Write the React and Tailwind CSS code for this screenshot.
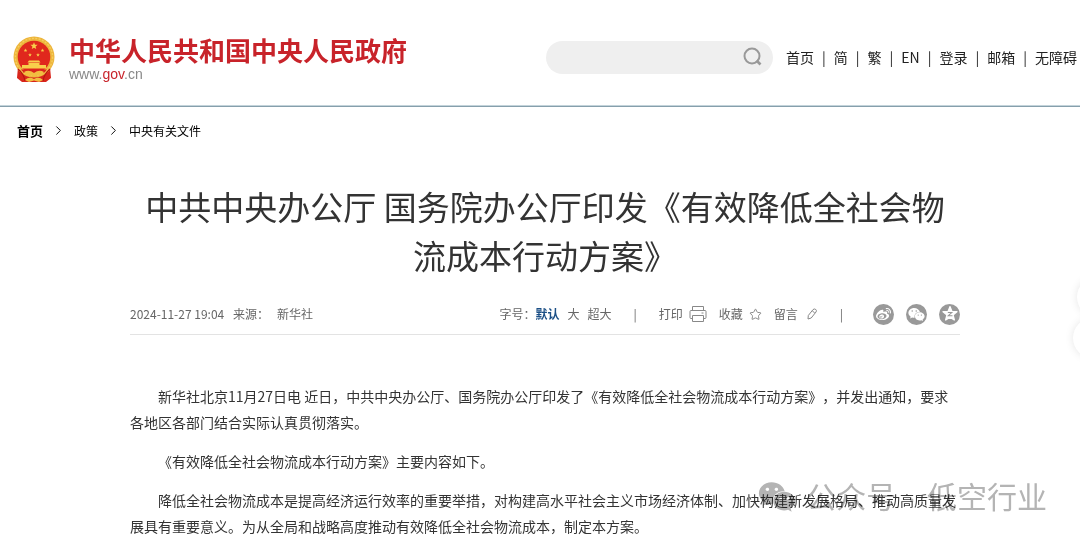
import { FaWeibo, FaWeixin } from "react-icons/fa";
import { ChevronRight, Star } from "lucide-react";

const navLinks = ["首页", "简", "繁", "EN", "登录", "邮箱", "无障碍"];

const paragraphs = [
  "新华社北京11月27日电 近日，中共中央办公厅、国务院办公厅印发了《有效降低全社会物流成本行动方案》，并发出通知，要求各地区各部门结合实际认真贯彻落实。",
  "《有效降低全社会物流成本行动方案》主要内容如下。",
  "降低全社会物流成本是提高经济运行效率的重要举措，对构建高水平社会主义市场经济体制、加快构建新发展格局、推动高质量发展具有重要意义。为从全局和战略高度推动有效降低全社会物流成本，制定本方案。",
];

const STAR = "M0 -10 L2.6 -3.4 L9.5 -3.1 L4.1 1.3 L5.9 8.1 L0 4.3 L-5.9 8.1 L-4.1 1.3 L-9.5 -3.1 L-2.6 -3.4 Z";

function Emblem() {
  return (
    <svg viewBox="0 0 42 46" className="h-[46px] w-[42px] shrink-0" aria-hidden="true">
      <path d="M5 31 L4 42 L9 46 H33 L38 42 L37 31 Z" fill="#d9251c" />
      <circle cx="21" cy="21" r="20.5" fill="#edb53c" />
      <circle cx="21" cy="21" r="18.6" fill="none" stroke="#f6cd5d" strokeWidth="1.4" strokeDasharray="2 1.4" />
      <circle cx="21" cy="21" r="16.3" fill="#e0281d" />
      <g fill="#f8cf4b">
        <path d={STAR} transform="translate(21 10) scale(.38)" />
        <path d={STAR} transform="translate(12.5 14.5) scale(.19)" />
        <path d={STAR} transform="translate(29.5 14.5) scale(.19)" />
        <path d={STAR} transform="translate(17 19) scale(.19)" />
        <path d={STAR} transform="translate(25 19) scale(.19)" />
        <path d="M16 24.5 H26 L27.5 26.5 H14.5 Z" />
        <path d="M15.5 27 H26.5 V29 H33 V32.5 H9 V29 H15.5 Z" />
      </g>
      <path d="M8 33.5 H34 L31 37 H11 Z" fill="#d9251c" />
      <path d="M11 36 Q16 33 21 37 Q26 33 31 36 L28 40 Q24 38 21 41 Q18 38 14 40 Z" fill="#f2bd40" />
      <path d="M5 33 Q11 38 12 45 M37 33 Q31 38 30 45" fill="none" stroke="#b9150f" strokeWidth="1.2" />
      <path d="M12 44 Q16 40 21 43 Q26 40 30 44 L26 46 L21 44.5 L16 46 Z" fill="#f2bd40" />
    </svg>
  );
}

function SearchIcon() {
  return (
    <svg viewBox="0 0 20 20" className="size-5" fill="none" stroke="#999999" strokeWidth="2" aria-hidden="true">
      <circle cx="10" cy="9" r="7.5" />
      <path d="M14.5 13.5 L18.5 17.5" strokeWidth="2.6" />
    </svg>
  );
}

function PrintIcon() {
  return (
    <svg viewBox="0 0 18 16" className="h-4 w-[18px]" fill="none" stroke="#888888" aria-hidden="true">
      <path d="M3.5 4.5 V.5 H14.5 V4.5 M3.5 12.5 H2 Q1 12.5 1 11.5 V5.5 Q1 4.5 2 4.5 H16 Q17 4.5 17 5.5 V11.5 Q17 12.5 16 12.5 H14.5" />
      <path d="M3.5 9.5 H14.5 V15.5 H3.5 Z M12.5 7 H14.5" />
    </svg>
  );
}

function PenIcon() {
  return (
    <svg viewBox="0 0 12 12" className="size-3" fill="none" stroke="#888888" aria-hidden="true">
      <path d="M2 11 L2.3 7.5 L7 1.6 Q8.3 .4 9.8 1.5 Q11 2.6 10 4 L5.2 10 Z M6.2 2.8 L8.8 5" />
    </svg>
  );
}

function QzoneIcon() {
  return (
    <svg viewBox="-11 -11 22 22" className="size-4" aria-hidden="true">
      <path d={STAR} fill="#fff" stroke="#fff" strokeWidth="2" strokeLinejoin="round" />
      <path d="M-3 -2.2 H2.6 L-2.4 2.4 H3.4" fill="none" stroke="#999999" strokeWidth="1.4" />
    </svg>
  );
}

function Share({ label, children }) {
  return (
    <button aria-label={label} className="flex size-[21px] items-center justify-center rounded-full bg-[#999999] text-white">
      {children}
    </button>
  );
}

export default function App() {
  return (
    <div className="relative min-h-screen overflow-hidden bg-white font-['Noto_Sans_CJK_SC',sans-serif] [text-spacing-trim:space-all]">
      <header className="flex h-[107px] items-center justify-between border-b border-[#869fac] pt-2 pr-[3px] pl-[13px] shadow-[inset_0_-1px_0_#c3d3da]">
        <a href="#" className="flex items-center gap-3.5 pt-1">
          <Emblem />
          <span className="flex flex-col">
            <span className="text-[26px] leading-[30px] font-bold text-[#c8232a]">中华人民共和国中央人民政府</span>
            <span className="font-['Liberation_Sans',sans-serif] text-sm leading-[18px] text-[#888888]">
              www.<span className="text-[#c8232a]">gov</span>.cn
            </span>
          </span>
        </a>
        <div className="flex items-center gap-[13px]">
          <form className="flex h-[33px] w-[227px] items-center rounded-full bg-[#efefef] pr-[11px] pl-4">
            <input type="text" aria-label="搜索" className="min-w-0 flex-1 bg-transparent text-sm outline-none" />
            <button type="button" aria-label="搜索">
              <SearchIcon />
            </button>
          </form>
          <nav className="flex items-center text-sm text-[#222222]">
            {navLinks.map((link, i) => (
              <span key={link} className="whitespace-nowrap">
                {i > 0 && <span className="mx-2">|</span>}
                <a href="#">{link}</a>
              </span>
            ))}
          </nav>
        </div>
      </header>

      <nav className="flex h-[47px] items-center gap-2 pl-[17px] text-xs text-black">
        <a href="#" className="text-[13px] font-bold">首页</a>
        <ChevronRight className="size-[15px]" strokeWidth={1.5} />
        <a href="#">政策</a>
        <ChevronRight className="size-[15px]" strokeWidth={1.5} />
        <a href="#">中央有关文件</a>
      </nav>

      <div className="pl-2.5">
        <main className="mx-auto max-w-[830px] pt-7 text-[#333333]">
          <h1 className="text-center text-[33px] leading-[49px]">
            中共中央办公厅 国务院办公厅印发《有效降低全社会物流成本行动方案》
          </h1>

          <div className="flex h-[55px] items-center justify-between border-b border-[#e3e3e3] pt-3.5 text-xs text-[#666666]">
            <div>
              2024-11-27 19:04 <span className="ml-1.5">来源：</span>
              <span className="ml-2">新华社</span>
            </div>
            <div className="flex items-center">
              <span>字号：</span>
              <button className="font-bold text-[#1b4f86]">默认</button>
              <button className="ml-2">大</button>
              <button className="ml-2">超大</button>
              <span className="mx-[22px]">|</span>
              <button className="flex items-center gap-1.5">
                打印
                <PrintIcon />
              </button>
              <button className="ml-3 flex items-center gap-1.5">
                收藏
                <Star className="size-[13px] text-[#888888]" strokeWidth={1.8} />
              </button>
              <button className="ml-3 flex items-center gap-2">
                留言
                <PenIcon />
              </button>
              <span className="mx-[22px]">|</span>
              <div className="ml-2 flex gap-3">
                <Share label="微博">
                  <FaWeibo className="size-[15px]" />
                </Share>
                <Share label="微信">
                  <FaWeixin className="size-[17px]" />
                </Share>
                <Share label="QQ空间">
                  <QzoneIcon />
                </Share>
              </div>
            </div>
          </div>

          <article className="flex flex-col gap-[13px] pt-12 text-sm leading-[26px]">
            {paragraphs.map((text) => (
              <p key={text} className="indent-7">{text}</p>
            ))}
          </article>
        </main>
      </div>

      {/* floating side buttons, tucked past the right edge */}
      <div className="absolute top-[277px] -right-[37px] size-10 rounded-full bg-white shadow-[0_0_8px_rgba(0,0,0,0.1)]" />
      <div className="absolute top-[318px] -right-[33px] size-10 rounded-full bg-white shadow-[0_0_8px_rgba(0,0,0,0.1)]" />

      {/* account watermark */}
      <div className="pointer-events-none absolute top-[473px] right-[33px] flex items-center gap-2.5 text-[#b4b4b4] mix-blend-multiply">
        <FaWeixin className="size-[38px]" />
        <span className="text-[30px] leading-[44px] whitespace-pre">
          公众号<span className="mx-0.5 font-['Liberation_Sans',sans-serif]"> · </span>低空行业
        </span>
      </div>
    </div>
  );
}
